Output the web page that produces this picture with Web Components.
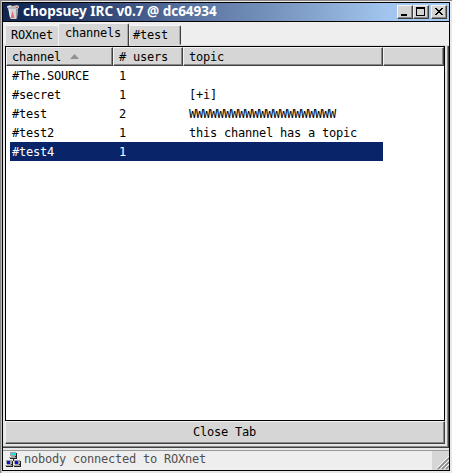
<!DOCTYPE html>
<html lang="en">
<head>
<meta charset="utf-8">
<title>chopsuey IRC</title>
<style>
html,body{margin:0;height:100%;overflow:hidden}
body{background:#eee;font:12px/16px "DejaVu Sans Mono",monospace;letter-spacing:-.224px;color:#000}
</style>
</head>
<body>
<irc-window></irc-window>
<script>
function define(name, html) {
  customElements.define(name, class extends HTMLElement {
    constructor() {
      super();
      const t = document.createElement('template');
      t.innerHTML = html;
      this.attachShadow({mode: 'open'}).append(t.content.cloneNode(true));
    }
  });
}

define('title-button', `
<style>
:host{display:block;box-sizing:border-box;width:16px;height:14px;background:#d4d4d4;border:1px solid;border-color:#f4f4f4 #404040 #404040 #f4f4f4;box-shadow:inset -1px -1px #888}
::slotted(svg){display:block}
</style><slot></slot>`);

define('title-bar', `
<style>
:host{display:flex;box-sizing:border-box;height:19px;padding:0 2px 0 4px;background:linear-gradient(90deg,#10254f 0%,#1d3463 12%,#465c8b 32%,#526c99 38%,#7d9bc4 65%,#a1c5ee 86%,#a6caf0 100%)}
.icon{width:13px;height:16px;margin-top:1px;flex:none}
.name{flex:1;margin-left:3px;font:bold 13.500px/17px "Noto Sans",sans-serif;letter-spacing:0;color:#fff;white-space:nowrap}
.buttons{display:flex;margin-top:2px}
.gap{margin-left:2px}
</style>
<svg class="icon" viewBox="0 0 13 16">
<path d="M1 4h10l-1 10-1 1H4l-1-1z" fill="#d6d3d3"/><path d="M9 5h2l-1 9-1 1z" fill="#9a9a9f"/>
<path d="M0 2l3-1 3 1 4-1 2 1v2l-3 1H3L0 4z" fill="#b9b9bd"/><path d="M1 2h3v1H1z" fill="#ececec"/>
<path d="M7 1h2v1H7zM9 3h2v1H9z" fill="#c8606a"/><path d="M5.500 7l2 7H3.500z" fill="#e0707a"/><path d="M2.500 5l1 8" stroke="#f4f4f4"/>
</svg>
<span class="name"><slot></slot></span>
<div class="buttons">
<title-button><svg width="14" height="12"><path d="M3 8h6v2H3z"/></svg></title-button>
<title-button><svg width="14" height="12" shape-rendering="crispEdges"><path fill-rule="evenodd" d="M2 1h9v9H2zM3 3v6h7V3z"/></svg></title-button>
<title-button class="gap"><svg width="14" height="12" shape-rendering="crispEdges"><path d="M3 2h2v1H3zM9 2h2v1H9zM4 3h2v1H4zM8 3h2v1H8zM5 4h4v1H5zM6 5h2v1H6zM5 6h4v1H5zM4 7h2v1H4zM8 7h2v1H8zM3 8h2v1H3zM9 8h2v1H9z"/></svg></title-button>
</div>`);

define('page-tab', `
<style>
:host{display:block;box-sizing:border-box;height:20px;padding:1px 0 0 5px;background:#d6d6d6;border:1px solid;border-color:#f4f4f4 #404040 #d6d6d6 #f0f0f0;border-radius:2px 2px 0 0;box-shadow:inset -1px 0 #a8a8a8;white-space:nowrap}
:host([active]){height:23px;margin-bottom:-1px;padding:1px 0 0 6px;border-bottom:0}
:host([first]){border-right:0;box-shadow:none}
</style><slot></slot>`);

define('tab-strip', `
<style>
:host{display:flex;box-sizing:border-box;align-items:flex-end;height:24px;padding-left:2px;background:#eee;border-bottom:1px solid #dcdcdc}
page-tab:nth-child(2){width:53px}
page-tab:nth-child(3){width:71px}
page-tab:nth-child(4){width:52px;padding-left:3px}
</style>
<page-tab first>ROXnet</page-tab><page-tab active>channels</page-tab><page-tab>#test</page-tab>`);

define('column-head', `
<style>
:host{display:block;box-sizing:border-box;height:19px;padding:1px 0 0 5px;background:#d6d6d6;border:1px solid;border-color:#f4f4f4 #404040 #404040 #f4f4f4;box-shadow:inset -1px -1px #888;white-space:nowrap}
svg{display:none;margin-left:9px;vertical-align:2px}
:host([sorted]) svg{display:inline-block}
</style><slot></slot><svg width="9" height="5"><path d="M4.500 0L9 5H0z" fill="#929292"/></svg>`);

define('channel-row', `
<style>
:host{display:grid;box-sizing:border-box;grid-template-columns:107px 70px 194px;width:373px;height:19px;margin-left:4px;padding:2px 0 0 2px;white-space:nowrap}
:host([selected]){background:#0a246a;color:#fff}
</style><slot name="channel"></slot><slot name="users"></slot><slot name="topic"></slot>`);

define('channel-list', `
<style>
:host{display:block;box-sizing:border-box;border:1px solid #000;height:375px;background:#fff}
.head{display:grid;grid-template-columns:107px 70px 200px 1fr}
</style>
<div class="head"><column-head sorted>channel</column-head><column-head># users</column-head><column-head>topic</column-head><column-head></column-head></div>
<slot></slot>`);

define('push-button', `
<style>
:host{display:block;box-sizing:border-box;height:23px;padding:2px 1px 0 0;text-align:center;background:#d6d6d6;border:1px solid;border-color:#f4f4f4 #404040 #404040 #eee;box-shadow:inset -1px -1px #888}
</style><slot></slot>`);

define('status-bar', `
<style>
:host{display:flex;height:19px;background:#eee;color:#505050;white-space:nowrap}
.net{width:17px;height:17px;margin:1px 0 0 2px;flex:none}
span{flex:1;margin:0 0 0 2px}
</style>
<svg class="net" viewBox="0 0 17 17" shape-rendering="crispEdges">
<defs><g id="pc"><path d="M2 1h6v4H2zM1 6h7v1H1zM7 5h1v2H7z" fill="#222"/><path d="M1 0h6v4H1zM2 4h4v1H2zM0 5h7v1H0z" fill="#a4a4a4"/></g></defs>
<path d="M8 7h1v2H8z" fill="#222"/>
<use href="#pc" x="4"/><use href="#pc" y="8"/><use href="#pc" x="8" y="8"/>
<path d="M6 1h4v2H6z" fill="#18e4e4"/><path d="M2 9h3v3H2zM10 9h3v3h-3z" fill="#1010d4"/>
</svg>
<span><slot></slot></span>
<svg width="17" height="19"><path d="M0 0h17v19H0z" fill="#d6d6d6"/><path d="M6 18L17 7M10 18l7-7M14 18l3-3" stroke="#888" stroke-width="1.600"/><path d="M5 17L17 5M9 17l8-8M13 17l4-4" stroke="#fafafa"/></svg>`);

define('irc-window', `
<style>
:host{display:block;box-sizing:border-box;width:452px;height:473px;padding:2px;background:#e8e8e8;box-shadow:inset 1px 1px #888,inset 2px 0 #c0c0c0}
.frame{box-sizing:border-box;height:469px;border:1px solid #000;background:#eee}
title-bar{border-bottom:1px solid #000}
.panel{box-sizing:border-box;height:402px;padding:0 3px 3px 2px;background:#e7e5e7;border-right:1px solid #404040;border-bottom:1px solid #404040;box-shadow:inset -1px -1px #888}
.line{height:2px;background:#e8e8e8;border-bottom:1px solid #999}
</style>
<div class="frame">
<title-bar>chopsuey IRC v0.7 @ dc64934</title-bar>
<tab-strip></tab-strip>
<div class="panel">
<channel-list>
<channel-row><span slot="channel">#The.SOURCE</span><span slot="users">1</span><span slot="topic"></span></channel-row>
<channel-row><span slot="channel">#secret</span><span slot="users">1</span><span slot="topic">[+i]</span></channel-row>
<channel-row><span slot="channel">#test</span><span slot="users">2</span><span slot="topic">WWWWWWWWWWWWWWWWWWWWW</span></channel-row>
<channel-row><span slot="channel">#test2</span><span slot="users">1</span><span slot="topic">this channel has a topic</span></channel-row>
<channel-row selected><span slot="channel">#test4</span><span slot="users">1</span><span slot="topic"></span></channel-row>
</channel-list>
<push-button>Close Tab</push-button>
</div>
<div class="line"></div>
<status-bar>nobody connected to ROXnet</status-bar>
</div>`);
</script>
</body>
</html>
